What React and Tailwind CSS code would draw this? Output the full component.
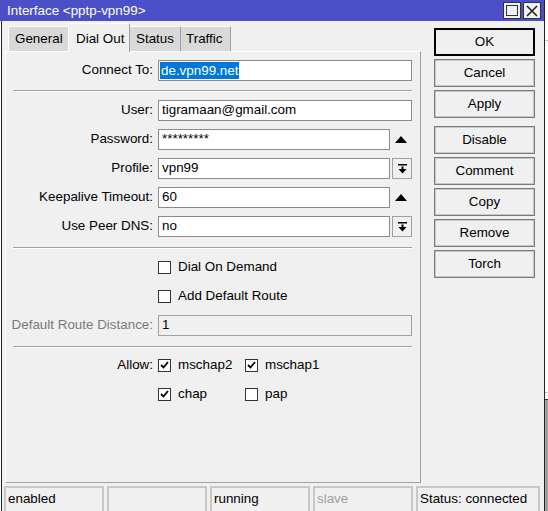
import React from 'react';

const font = "font-['Liberation_Sans',Arial,sans-serif]";

function UpArrow() {
  return (
    <svg width="12" height="7" viewBox="0 0 12 7" className="block">
      <polygon points="0,7 12,7 6,0" fill="#000" />
    </svg>
  );
}

function DropIcon() {
  return (
    <svg width="9" height="10" viewBox="0 0 9 10" className="block">
      <rect x="0" y="0" width="9" height="1.5" fill="#000" />
      <rect x="3.5" y="2.5" width="2" height="3" fill="#000" />
      <polygon points="0.5,5 8.5,5 4.5,9.5" fill="#000" />
    </svg>
  );
}

function Checkbox({ checked }) {
  return (
    <span className="w-[13px] h-[13px] border border-[#333] bg-white flex items-center justify-center shrink-0">
      {checked && (
        <svg width="9" height="8" viewBox="0 0 9 8">
          <polyline points="1,4 3.5,6.5 8,1" fill="none" stroke="#000" strokeWidth="1.8" />
        </svg>
      )}
    </span>
  );
}

function Field({ label, children, extra, wide, muted }) {
  return (
    <div className="flex items-center h-[21px]">
      <span className={`w-[147px] text-right whitespace-nowrap ${muted ? 'text-[#7a7a7a]' : 'text-black'}`}>{label}</span>
      <div className={`ml-[5px] h-[21px] border ${muted ? 'bg-[#f0f0f0] border-[#a0a0a0]' : 'bg-white border-[#8c8c8c]'} flex items-center pl-[3px] ${wide ? 'w-[254px]' : 'w-[232px]'}`}>
        {children}
      </div>
      {extra}
    </div>
  );
}

function Sep({ className }) {
  return <div className={`ml-[7px] w-[399px] h-[2px] border-t border-[#a0a0a0] border-b border-b-white ${className}`} />;
}

function Btn({ children, primary, className = '' }) {
  return (
    <div className={`h-[28px] flex items-center justify-center ${primary ? 'border-2 border-black' : 'border border-[#7a7a7a] shadow-[inset_0_0_0_1px_#c8c8c8]'} bg-[#f0f0f0] ${className}`}>
      {children}
    </div>
  );
}

export default function App() {
  const buttons = ['Cancel', 'Apply'];
  const buttons2 = ['Disable', 'Comment', 'Copy', 'Remove', 'Torch'];

  return (
    <div className={`w-[548px] h-[511px] overflow-hidden bg-white flex text-[13.4px] text-black ${font}`}>
      <div className="w-[545px] h-full flex flex-col border-r border-[#222]">
        {/* title bar */}
        <div className="h-[21px] bg-[#4c50c8] flex items-center pl-[7px] pr-[3px] shrink-0">
          <span className="text-white flex-1 leading-none">Interface &lt;pptp-vpn99&gt;</span>
          <div className="flex gap-[2px] items-center">
            <span className="w-[18px] h-[17px] bg-[#f0f0f0] border border-[#333] flex items-center justify-center">
              <span className="w-[12px] h-[11px] border border-[#333]" />
            </span>
            <span className="w-[18px] h-[17px] bg-[#f0f0f0] border border-[#333] flex items-center justify-center">
              <svg width="12" height="12" viewBox="0 0 12 12">
                <path d="M1 1 L11 11 M11 1 L1 11" stroke="#222" strokeWidth="1.6" />
              </svg>
            </span>
          </div>
        </div>

        {/* body */}
        <div className="flex-1 ml-px border-l border-[#222] bg-[#f0f0f0] flex flex-col">
          <div className="flex">
            <div className="ml-[3px] flex flex-col">
              {/* tabs */}
              <div className="flex items-end h-[30px] ml-[3px]">
                <div className="w-[60px] h-[25px] bg-[#d9d9d9] border-t border-l border-white flex items-center pl-[6px]">General</div>
                <div className="relative z-10 -mb-px w-[62px] h-[29px] bg-[#f0f0f0] border-t border-l border-white border-r border-r-[#a0a0a0] flex items-start pt-[5px] pl-[7px]">Dial Out</div>
                <div className="w-[51px] h-[25px] bg-[#d9d9d9] border-t border-white border-r border-r-[#a0a0a0] flex items-center pl-[6px]">Status</div>
                <div className="w-[50px] h-[25px] bg-[#d9d9d9] border-t border-white border-r border-r-[#a0a0a0] flex items-center pl-[5px]">Traffic</div>
              </div>

              {/* panel */}
              <div className="w-[416px] h-[432px] border border-white border-r-[#a0a0a0] border-b-[#a0a0a0] flex flex-col">
                <div className="mt-[8px]">
                  <Field label="Connect To:" wide>
                    <span className="bg-[#0078d7] text-white leading-[17px] px-px -ml-[2px]">de.vpn99.net</span>
                  </Field>
                </div>
                <Sep className="mt-[9px]" />
                <div className="mt-[8px] flex flex-col gap-[8px]">
                  <Field label="User:" wide>tigramaan@gmail.com</Field>
                  <Field
                    label="Password:"
                    extra={<span className="w-[22px] flex justify-center"><UpArrow /></span>}
                  >
                    *********
                  </Field>
                  <Field
                    label="Profile:"
                    extra={
                      <span className="ml-[2px] w-[20px] h-[21px] border border-[#a0a0a0] bg-[#f0f0f0] flex items-center justify-center">
                        <DropIcon />
                      </span>
                    }
                  >
                    vpn99
                  </Field>
                  <Field
                    label="Keepalive Timeout:"
                    extra={<span className="w-[22px] flex justify-center"><UpArrow /></span>}
                  >
                    60
                  </Field>
                  <Field
                    label="Use Peer DNS:"
                    extra={
                      <span className="ml-[2px] w-[20px] h-[21px] border border-[#a0a0a0] bg-[#f0f0f0] flex items-center justify-center">
                        <DropIcon />
                      </span>
                    }
                  >
                    no
                  </Field>
                </div>
                <Sep className="mt-[10px]" />
                <div className="mt-[8px] flex flex-col gap-[8px]">
                  <div className="flex items-center h-[21px] pl-[152px] gap-[7px]">
                    <Checkbox />
                    <span>Dial On Demand</span>
                  </div>
                  <div className="flex items-center h-[21px] pl-[152px] gap-[7px]">
                    <Checkbox />
                    <span>Add Default Route</span>
                  </div>
                  <Field label="Default Route Distance:" wide muted>
                    <span className="text-black">1</span>
                  </Field>
                </div>
                <Sep className="mt-[10px]" />
                <div className="mt-[7px] flex flex-col gap-[8px]">
                  <div className="flex items-center h-[21px]">
                    <span className="w-[147px] text-right">Allow:</span>
                    <div className="ml-[5px] w-[87px] flex items-center gap-[7px]">
                      <Checkbox checked />
                      <span>mschap2</span>
                    </div>
                    <div className="flex items-center gap-[7px]">
                      <Checkbox checked />
                      <span>mschap1</span>
                    </div>
                  </div>
                  <div className="flex items-center h-[21px]">
                    <span className="w-[147px]" />
                    <div className="ml-[5px] w-[87px] flex items-center gap-[7px]">
                      <Checkbox checked />
                      <span>chap</span>
                    </div>
                    <div className="flex items-center gap-[7px]">
                      <Checkbox />
                      <span>pap</span>
                    </div>
                  </div>
                </div>
              </div>
            </div>

            {/* buttons */}
            <div className="ml-[13px] mt-[7px] w-[101px] flex flex-col gap-[3px]">
              <Btn primary>OK</Btn>
              {buttons.map((b) => (
                <Btn key={b}>{b}</Btn>
              ))}
              {buttons2.map((b, i) => (
                <Btn key={b} className={i === 0 ? 'mt-[5px]' : ''}>{b}</Btn>
              ))}
            </div>
          </div>

          {/* status bar */}
          <div className="mt-[3px] ml-[2px] flex gap-[3px]">
            {[
              { t: 'enabled', w: 'w-[100px]' },
              { t: '', w: 'w-[100px]' },
              { t: 'running', w: 'w-[100px]' },
              { t: 'slave', w: 'w-[100px]', muted: true },
              { t: 'Status: connected', w: 'w-[124px]' },
            ].map((c, i) => (
              <div
                key={i}
                className={`${c.w} h-[28px] border-2 border-[#c8c8c8] px-[2px] pt-[3px] leading-[16px] whitespace-nowrap ${c.muted ? 'text-[#a0a0a0]' : ''}`}
              >
                {c.t}
              </div>
            ))}
          </div>
        </div>
      </div>

      {/* background behind the window */}
      <div className="flex-1 h-full flex flex-col">
        <div className="h-[40px]" />
        <div className="h-px bg-[#c8c8c8]" />
        <div className="h-[351px]" />
        <div className="h-px bg-[#c8c8c8]" />
        <div className="h-[6px]" />
        <div className="flex-1 bg-[#a0a0a0] border-t border-[#333]" />
      </div>
    </div>
  );
}
